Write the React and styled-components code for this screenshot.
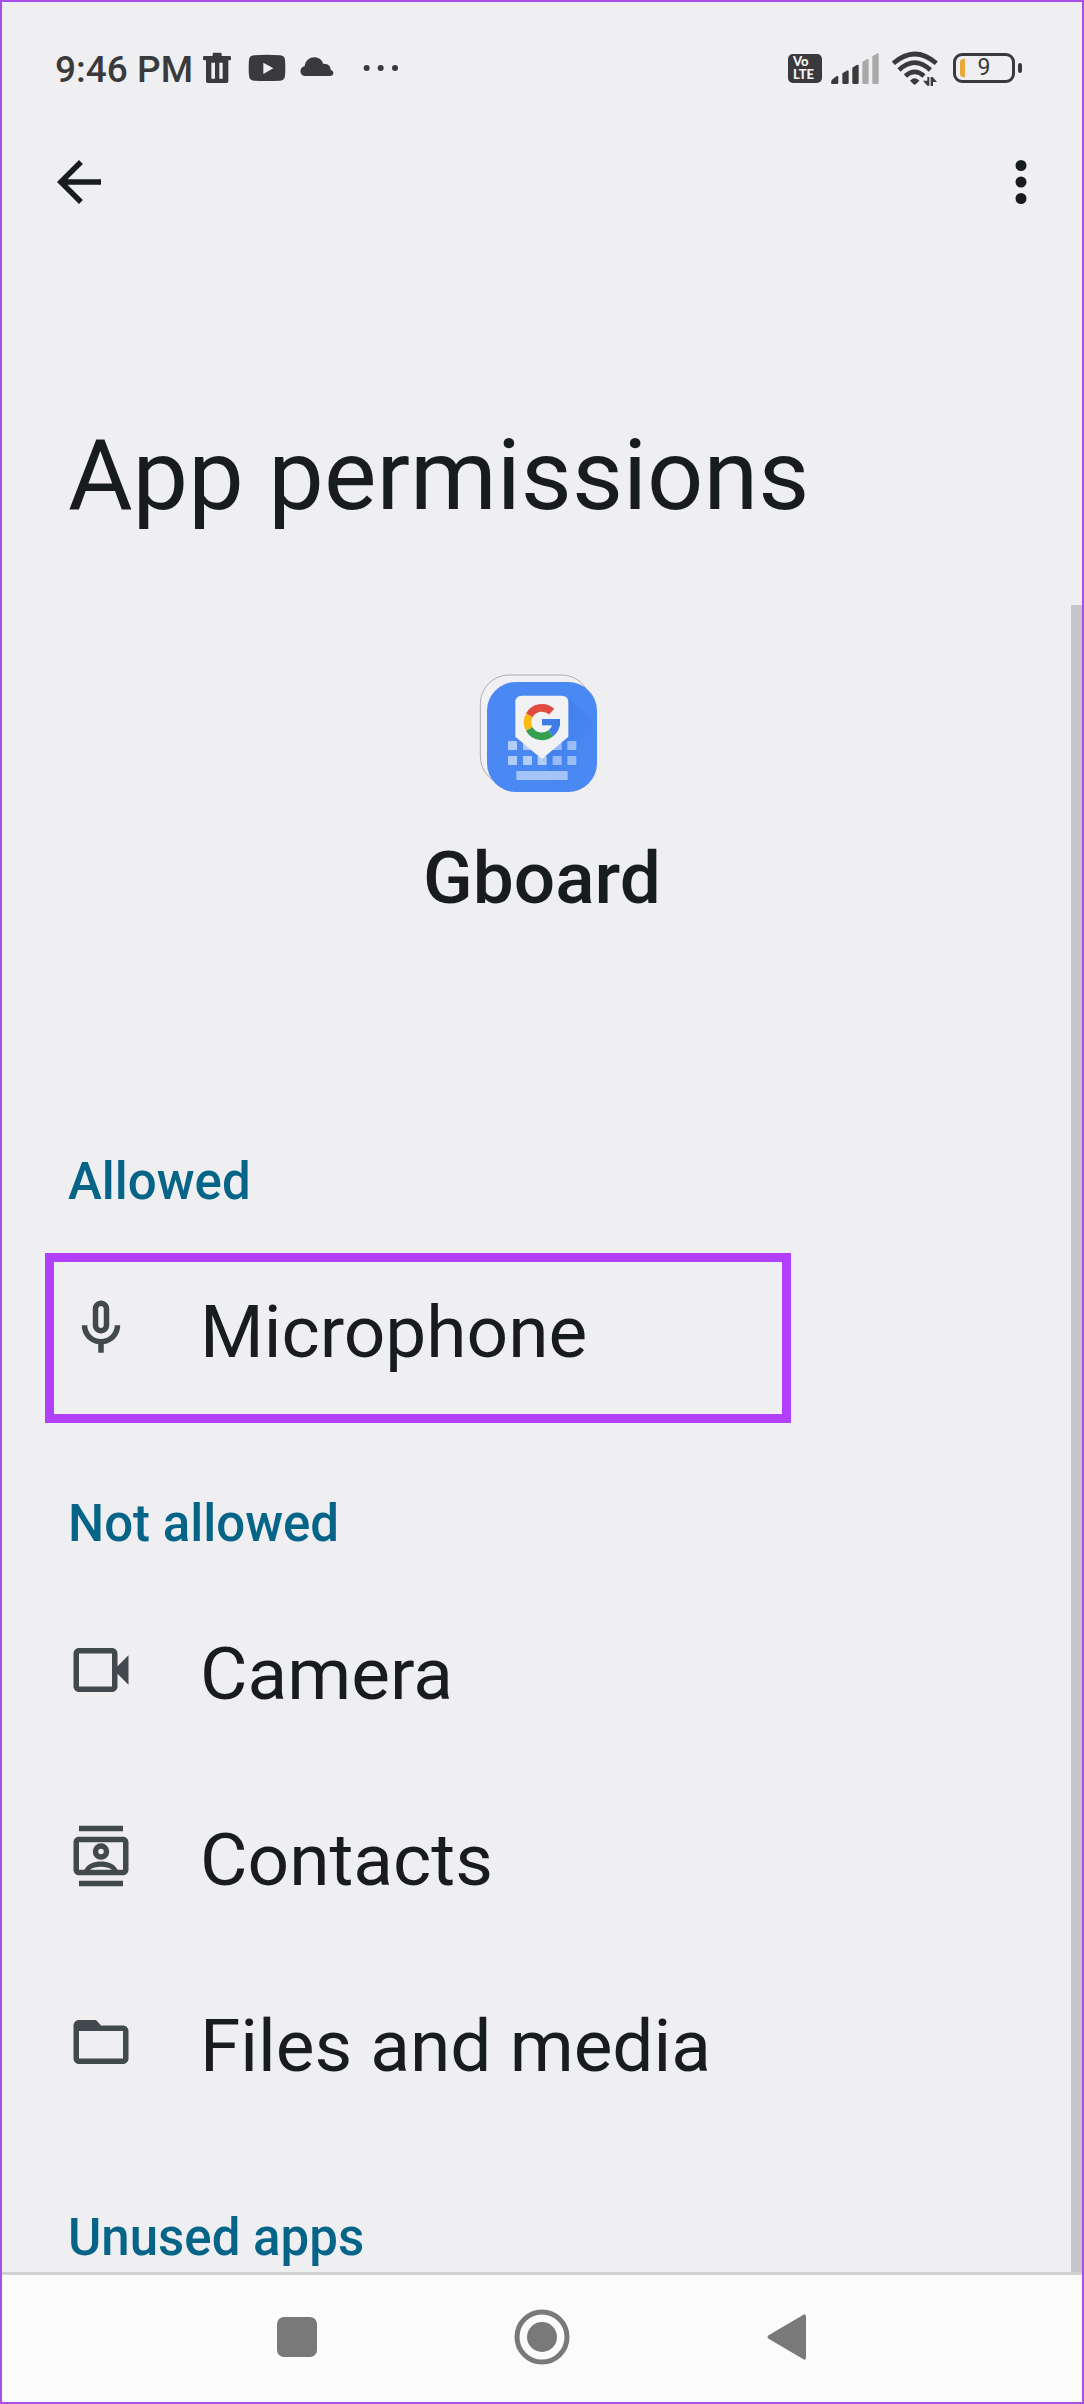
import React from 'react'
import styled, { createGlobalStyle } from 'styled-components'

const permissionsAllowed = [
    { name: 'Microphone', icon: 'mic', highlighted: true },
]

const permissionsDenied = [
    { name: 'Camera', icon: 'camera' },
    { name: 'Contacts', icon: 'contacts' },
    { name: 'Files and media', icon: 'folder' },
]

const iconPaths = {
    back: 'M20 11H7.83l5.59-5.59L12 4l-8 8 8 8 1.41-1.41L7.83 13H20z',
    more: 'M12 8a2 2 0 1 0 0-4 2 2 0 0 0 0 4zm0 2a2 2 0 1 0 0 4 2 2 0 0 0 0-4zm0 6a2 2 0 1 0 0 4 2 2 0 0 0 0-4z',
    mic: 'M12 14c1.66 0 3-1.34 3-3V5c0-1.66-1.34-3-3-3S9 3.34 9 5v6c0 1.66 1.34 3 3 3zm-1-9c0-.55.45-1 1-1s1 .45 1 1v6c0 .55-.45 1-1 1s-1-.45-1-1zM17 11c0 2.76-2.24 5-5 5s-5-2.24-5-5H5c0 3.53 2.61 6.43 6 6.92V21h2v-3.08c3.39-.49 6-3.39 6-6.92z',
    camera: 'M4 4h12c1.1 0 2 .9 2 2v4.6l4-4v10.8l-4-4V18c0 1.1-.9 2-2 2H4c-1.1 0-2-.9-2-2V6c0-1.1.9-2 2-2zm0 2v12h12V6z',
    contacts: 'M4 1h16v2H4zM4 21h16v2H4zM4 5h16c1.1 0 2 .9 2 2v10c0 1.1-.9 2-2 2H4c-1.1 0-2-.9-2-2V7c0-1.1.9-2 2-2zm0 2v10h2c1-2.1 3.5-3 6-3s5 .9 6 3h2V7zm4 10h8c-1-.8-2.5-1.1-4-1.1s-3 .3-4 1.1zM12 7.4a3 3 0 1 1 0 6 3 3 0 0 1 0-6zm0 2a1 1 0 1 0 0 2 1 1 0 0 0 0-2z',
    folder: 'M4 4h6.2l1.8 2h8c1.1 0 2 .9 2 2v10c0 1.1-.9 2-2 2H4c-1.1 0-2-.9-2-2V6c0-1.1.9-2 2-2zm0 4v10h16V8z',
}

function Icon({ name }) {
    return (
        <IconSvg viewBox="0 0 24 24" aria-hidden="true">
            <path d={iconPaths[name]} fillRule="evenodd" />
        </IconSvg>
    )
}

function StatusBar() {
    return (
        <Status>
            <Clock>9:46 PM</Clock>
            <StatusGroup $gap={12}>
                <StatusIcon $width={36} viewBox="600 150 108 108">
                    <path fillRule="evenodd" d="M641 168v-6q0-4 4-4h19q4 0 4 4v6h24q4 0 4 4v5q0 4-4 4h-4v63q0 5-5 5h-57q-5 0-5-5v-63h-5q-4 0-4-4v-5q0-4 4-4zM637 188v48h11v-48zM661 188v48h10v-48z" />
                </StatusIcon>
                <StatusIcon $width={40} viewBox="744 150 120 108">
                    <path fillRule="evenodd" d="M765 166q39-3 78 0 14 1 15 14 2 23 0 47-1 14-15 15-39 2-78 0-14-1-15-15-2-24 0-47 1-13 15-14zM793 188v34l30-17z" />
                </StatusIcon>
                <StatusIcon $width={36} viewBox="900 150 108 108">
                    <path d="M918 228C900 228 900 201 917 199C921 165 965 164 972 191C988 190 995 199 995 209C1007 213 1005 228 993 228Z" />
                </StatusIcon>
                <StatusIcon $width={54} viewBox="1044 150 162 108">
                    <circle cx="1103" cy="204" r="9" />
                    <circle cx="1145" cy="204" r="9" />
                    <circle cx="1188" cy="204" r="9" />
                </StatusIcon>
            </StatusGroup>
            <Spacer />
            <StatusGroup $gap={8}>
                <Volte>
                    <span>Vo</span>
                    <span>LTE</span>
                </Volte>
                <StatusIcon $width={50} viewBox="270 150 150 108">
                    <path d="M275 240l14-11q6-3 6 3v16q0 4-4 4h-14q-4 0-4-4z" />
                    <path d="M307 220l13-8q6-3 6 3v33q0 4-4 4h-11q-4 0-4-4z" />
                    <path d="M337 203l13-8q6-3 6 3v50q0 4-4 4h-11q-4 0-4-4z" />
                    <path fill="#a9a9ab" d="M367 186l13-8q6-3 6 3v67q0 4-4 4h-11q-4 0-4-4z" />
                    <path fill="#a9a9ab" d="M397 169l13-8q6-3 6 3v84q0 4-4 4h-11q-4 0-4-4z" />
                </StatusIcon>
                <StatusIcon $width={57} viewBox="444 150 171 108">
                    <g fill="none" stroke="#3a3a3c" strokeWidth="14">
                        <path d="M460 190Q524 134 589 190" />
                        <path d="M477 210Q524 166 571 210" />
                        <path d="M496 228Q524 203 552 228" />
                    </g>
                    <path d="M510 242Q524 228 538 242L528 252Q524 257 520 252Z" />
                    <path d="M562 231h6v26h-6L549 242h13zM572 258v-27h6l13 15h-12v12z" />
                </StatusIcon>
                <Battery>
                    <BatteryBody>
                        <BatteryLevel />
                        9
                    </BatteryBody>
                    <BatteryTip />
                </Battery>
            </StatusGroup>
        </Status>
    )
}

function GboardLogo() {
    const columns = [204, 249, 293, 338, 382]

    return (
        <Logo viewBox="114 99 384 384" role="img" aria-label="Gboard">
            <defs>
                <linearGradient id="shade" x1="0" y1="0" x2="1" y2="1">
                    <stop offset="0" stopColor="#2f6fdc" stopOpacity=".55" />
                    <stop offset=".7" stopColor="#2f6fdc" stopOpacity="0" />
                </linearGradient>
            </defs>
            <rect x="121" y="105" width="330" height="330" rx="86" fill="#f1f1f3" stroke="#8d8d92" strokeWidth="2" />
            <rect x="141" y="126" width="330" height="330" rx="86" fill="#4a88f4" />
            <path d="M380 172L471 250V330Q471 456 400 456H390L300 356Z" fill="url(#shade)" />
            {columns.map((x, index) => (
                <g key={x} fill="#fff" fillOpacity={index > 2 ? 0.45 : 0.58}>
                    <rect x={x} y="303" width="27" height="27" rx="2" />
                    <rect x={x} y="348" width="27" height="27" rx="2" />
                </g>
            ))}
            <rect x="229" y="393" width="154" height="27" rx="2" fill="#fff" fillOpacity=".5" />
            <path d="M246 167H365Q385 167 385 187V290L306 357L226 290V187Q226 167 246 167Z" fill="#f2f2f4" />
            <g fill="none" strokeWidth="23">
                <path d="M335 215A43 43 0 0 0 268 226" stroke="#e24b40" />
                <path d="M268 226A43 43 0 0 0 268 267" stroke="#fbbc11" />
                <path d="M268 267A43 43 0 0 0 332 280" stroke="#34a04f" />
                <path d="M332 280A43 43 0 0 0 349 246" stroke="#3f7de6" />
            </g>
            <path d="M306 237H360V256H306Z" fill="#3f7de6" />
        </Logo>
    )
}

function PermissionList({ items }) {
    return (
        <List>
            {items.map((item) => (
                <li key={item.name}>
                    <Row href="#">
                        <Icon name={item.icon} />
                        <RowLabel>{item.name}</RowLabel>
                        {item.highlighted && <Highlight />}
                    </Row>
                </li>
            ))}
        </List>
    )
}

function App() {
    return (
        <>
            <GlobalStyle />
            <Page>
                <StatusBar />
                <Toolbar>
                    <IconButton aria-label="Back"><Icon name="back" /></IconButton>
                    <IconButton aria-label="More options"><Icon name="more" /></IconButton>
                </Toolbar>
                <Title>App permissions</Title>
                <Content>
                    <AppHeader>
                        <GboardLogo />
                        <AppName>Gboard</AppName>
                    </AppHeader>
                    <SectionTitle>Allowed</SectionTitle>
                    <PermissionList items={permissionsAllowed} />
                    <SectionTitle>Not allowed</SectionTitle>
                    <PermissionList items={permissionsDenied} />
                    <SectionTitle>Unused apps</SectionTitle>
                    <ScrollThumb />
                </Content>
                <NavBar>
                    <NavButton aria-label="Recent apps">
                        <NavSvg viewBox="0 0 56 56"><rect x="8" y="8" width="40" height="40" rx="7" /></NavSvg>
                    </NavButton>
                    <NavButton aria-label="Home">
                        <NavSvg viewBox="0 0 56 56">
                            <circle cx="28" cy="28" r="25" fill="none" stroke="#797979" strokeWidth="5" />
                            <circle cx="28" cy="28" r="15" />
                        </NavSvg>
                    </NavButton>
                    <NavButton aria-label="Back">
                        <NavSvg viewBox="0 0 56 56"><path d="M10 26L44 6Q47 4 47 8V48Q47 52 44 50L10 30Q7 28 10 26Z" /></NavSvg>
                    </NavButton>
                </NavBar>
            </Page>
        </>
    )
}
export default App

const GlobalStyle = createGlobalStyle`
    * {
        box-sizing: border-box;
    }
    body {
        margin: 0;
        background-color: #efeff1;
        color: #181c1e;
        font-family: Roboto, "Liberation Sans", sans-serif;
    }
    button {
        border: 0;
        padding: 0;
        background: none;
        color: inherit;
    }
`
const Page = styled.div`
    display: flex;
    flex-direction: column;
    height: 100vh;
    border: 2px solid #a94ee8;
`
const Status = styled.div`
    display: flex;
    align-items: flex-start;
    flex-shrink: 0;
    height: 110px;
    padding: 48px 60px 0 53px;
    color: #3a3a3c;
`
const Clock = styled.span`
    margin-right: 6px;
    font-size: 37px;
    font-weight: 500;
    line-height: 40px;
    white-space: nowrap;
`
const StatusGroup = styled.div`
    display: flex;
    align-items: center;
    gap: ${props => props.$gap}px;
    height: 36px;
`
const StatusIcon = styled.svg`
    width: ${props => props.$width}px;
    height: 36px;
    fill: #3a3a3c;
`
const Spacer = styled.div`
    flex: 1;
`
const Volte = styled.div`
    display: flex;
    flex-direction: column;
    justify-content: center;
    width: 34px;
    height: 29px;
    padding-left: 5px;
    border-radius: 5px;
    background-color: #3a3a3c;
    color: #f4f4f5;
    font-family: Lato, sans-serif;
    font-size: 13px;
    font-weight: 900;
    line-height: 13px;
`
const Battery = styled.div`
    display: flex;
    align-items: center;
    gap: 3px;
`
const BatteryBody = styled.div`
    position: relative;
    display: flex;
    align-items: center;
    justify-content: center;
    width: 62px;
    height: 30px;
    border: 3px solid #3a3a3c;
    border-radius: 9px;
    font-size: 23px;
    line-height: 24px;
`
const BatteryLevel = styled.span`
    position: absolute;
    left: 4px;
    top: 3px;
    bottom: 3px;
    width: 5px;
    border-radius: 3px 0 0 3px;
    background-color: #e8a93c;
`
const BatteryTip = styled.span`
    width: 4px;
    height: 10px;
    border-radius: 2px;
    background-color: #3a3a3c;
`
const Toolbar = styled.header`
    display: flex;
    align-items: center;
    justify-content: space-between;
    flex-shrink: 0;
    height: 140px;
    padding: 0 28px 0 44px;
`
const IconButton = styled.button`
    display: flex;
    cursor: pointer;
`
const IconSvg = styled.svg`
    flex-shrink: 0;
    width: 66px;
    height: 66px;
    fill: currentColor;
`
const Title = styled.h1`
    flex-shrink: 0;
    margin: 0;
    padding: 163px 66px 70px;
    font-size: 99px;
    font-weight: 400;
    line-height: 120px;
`
const Content = styled.main`
    position: relative;
    flex: 1;
    min-height: 0;
    overflow: hidden;
`
const AppHeader = styled.div`
    display: flex;
    flex-direction: column;
    align-items: center;
    gap: 40px;
    padding: 68px 0 168px;
`
const Logo = styled.svg`
    width: 128px;
    height: 128px;
`
const AppName = styled.div`
    font-size: 73px;
    font-weight: 500;
    line-height: 74px;
`
const SectionTitle = styled.h2`
    margin: 0;
    padding: 42px 66px 0;
    color: #066488;
    font-size: 51px;
    font-weight: 500;
    line-height: 114px;
`
const List = styled.ul`
    margin: 0;
    padding: 0;
    list-style-type: none;
`
const Row = styled.a`
    position: relative;
    display: flex;
    align-items: flex-start;
    gap: 66px;
    padding: 56px 66px;
    color: #42494d;
    text-decoration: none;
`
const RowLabel = styled.span`
    color: #181c1e;
    font-size: 73px;
    line-height: 74px;
`
const Highlight = styled.span`
    position: absolute;
    top: 14px;
    bottom: 2px;
    left: 43px;
    width: 746px;
    border: 9px solid #b040fb;
`
const ScrollThumb = styled.div`
    position: absolute;
    top: 0;
    right: 0;
    bottom: 0;
    width: 11px;
    background-color: #c5c5cb;
`
const NavBar = styled.nav`
    display: grid;
    grid-template-columns: repeat(3, 245px);
    justify-content: center;
    flex-shrink: 0;
    height: 130px;
    padding-bottom: 4px;
    border-top: 3px solid #d1d1d3;
    background-color: #fbfbfc;
`
const NavButton = styled.button`
    display: flex;
    align-items: center;
    justify-content: center;
    cursor: pointer;
`
const NavSvg = styled.svg`
    width: 56px;
    height: 56px;
    fill: #797979;
`
